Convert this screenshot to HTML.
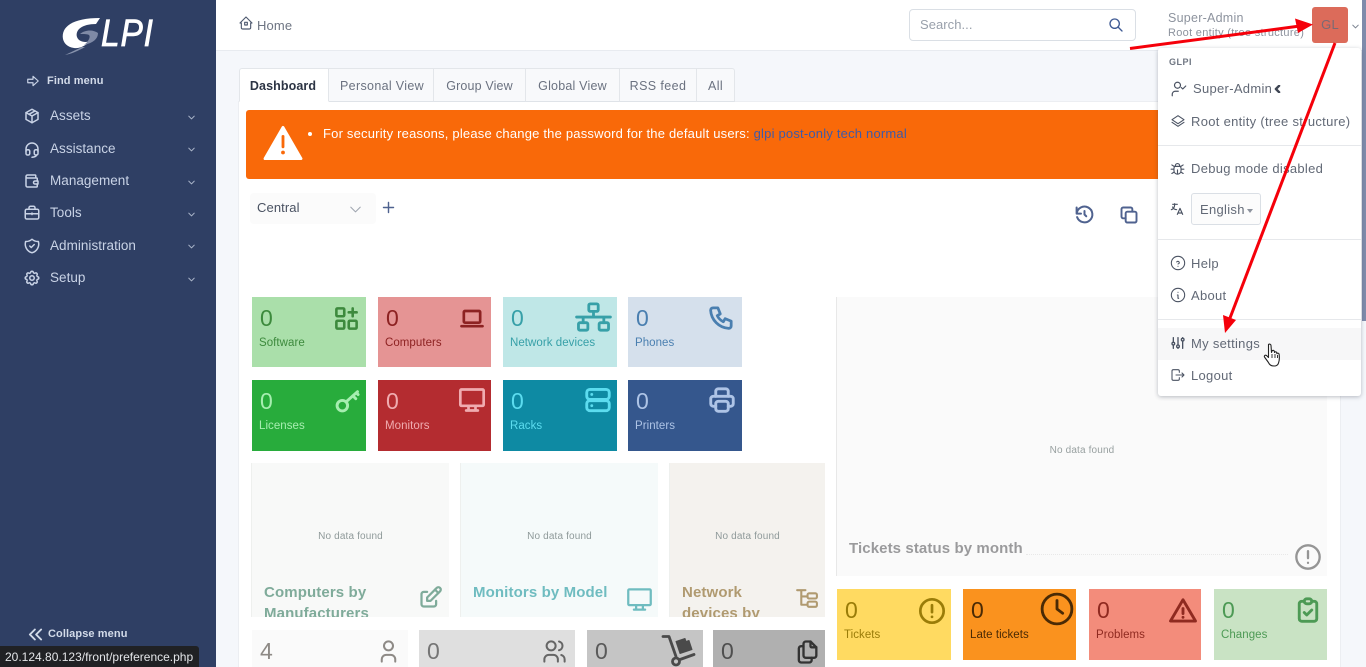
<!DOCTYPE html>
<html><head><meta charset="utf-8"><title>GLPI</title>
<style>
html,body{margin:0;padding:0;width:1366px;height:667px;overflow:hidden;background:#f5f7fb}
body{font-family:"Liberation Sans",sans-serif;font-size:13px;letter-spacing:.25px;position:relative;color:#626976}
.a,.c,.b,svg{position:absolute}
.a{white-space:nowrap;line-height:16px}
svg.i{fill:none;stroke:currentColor;stroke-width:2;stroke-linecap:round;stroke-linejoin:round}
.n{color:#c9d3e6;left:50px;font-size:13.5px;letter-spacing:.03px}
.c{height:71px;overflow:hidden}
.c svg.i{stroke-width:2.300}
.c .v{position:absolute;left:8px;top:8px;font-size:23px;line-height:26px;letter-spacing:0}
.c .l{position:absolute;left:7px;top:39px;font-size:11.5px;line-height:14px;letter-spacing:.05px;white-space:nowrap}
.b{top:463px;height:154px;overflow:hidden}
.b .nd{position:absolute;width:100%;text-align:center;top:68px;font-size:10px;line-height:12px;color:#8f9a9a;letter-spacing:.15px}
.b .t{position:absolute;left:12px;top:119px;font-weight:bold;font-size:15px;line-height:21px;letter-spacing:.12px}
.tab{top:68px;height:34px;line-height:34px;background:#f8f9fb;border:1px solid #e3e6ea;border-left:0;box-sizing:border-box;text-align:center;color:#6b7280;position:absolute;font-size:12.5px;letter-spacing:.33px;border-bottom-color:#dfe3e8}
.m{left:1191px;color:#626976;font-size:13px;letter-spacing:.3px}
.hr{position:absolute;left:1158px;width:203px;height:1px;background:#e6e8eb}
</style></head><body>

<!-- sidebar -->
<div class="b" style="left:0;top:0;width:216px;height:667px;background:#2f3f64"></div>
<svg style="left:60px;top:12px" width="42" height="45" viewBox="0 0 42 45">
<path d="M3 27C1 15 12 6 40 6L36 12C22 12 15 18 17 25C19 30 25 31 31 29C26 33 20 37 14 36C7 35 4 31 3 27Z" fill="#fff"/>
<path d="M20 22C26 17 34 18 38 21C38 27 33 31 24 33C28 30 31 25 29 23C27 22 24 22 20 22Z" fill="#7f8aa6"/>
<path d="M5 43L22 35L25 35C18 39 11 42 5 43Z" fill="#8792ac"/>
</svg>
<div class="a" style="left:101px;top:15px;font-size:38px;line-height:38px;color:#fff;font-style:italic;letter-spacing:1px;-webkit-text-stroke:.8px #fff;transform:scaleX(.88);transform-origin:left top">LPI</div>

<svg class="i" style="left:26px;top:74px;color:#c9d3e6" width="14" height="14" viewBox="0 0 24 24"><path d="M3 9h9V4l9 8-9 8v-5H3z"/></svg>
<div class="a" style="left:47px;top:73px;font-size:11px;font-weight:bold;color:#d3dbe9;letter-spacing:.1px">Find menu</div>

<svg class="i" style="left:23px;top:107px;color:#c9d3e6" width="18" height="18" viewBox="0 0 24 24"><path d="M12 3l8 4.500v9L12 21l-8-4.500v-9z"/><path d="M12 12l8-4.500M12 12v9M12 12L4 7.500M16 5.250l-8 4.500"/></svg>
<div class="a n" style="top:108px">Assets</div>
<svg class="i" style="left:23px;top:140px;color:#c9d3e6" width="18" height="18" viewBox="0 0 24 24"><rect x="4" y="13" width="5" height="7" rx="2"/><rect x="15" y="13" width="5" height="7" rx="2"/><path d="M4 15v-3a8 8 0 0 1 16 0v3M18 20a6 3 0 0 1-6 3"/></svg>
<div class="a n" style="top:141px">Assistance</div>
<svg class="i" style="left:23px;top:172px;color:#c9d3e6" width="18" height="18" viewBox="0 0 24 24"><path d="M17 8V5a1 1 0 0 0-1-1H6a2 2 0 0 0 0 4h12a1 1 0 0 1 1 1v3M19 16v3a1 1 0 0 1-1 1H6a2 2 0 0 1-2-2V6"/><path d="M20 12v4h-4a2 2 0 0 1 0-4z"/></svg>
<div class="a n" style="top:173px">Management</div>
<svg class="i" style="left:23px;top:204px;color:#c9d3e6" width="18" height="18" viewBox="0 0 24 24"><rect x="3" y="7" width="18" height="13" rx="2"/><path d="M8 7V5a2 2 0 0 1 2-2h4a2 2 0 0 1 2 2v2M3 13h18M12 12v2"/></svg>
<div class="a n" style="top:205px">Tools</div>
<svg class="i" style="left:23px;top:237px;color:#c9d3e6" width="18" height="18" viewBox="0 0 24 24"><path d="M12 3a12 12 0 0 0 8.500 3A12 12 0 0 1 12 21 12 12 0 0 1 3.500 6 12 12 0 0 0 12 3"/><path d="M9 12l2 2 4-4"/></svg>
<div class="a n" style="top:238px">Administration</div>
<svg class="i" style="left:23px;top:269px;color:#c9d3e6" width="18" height="18" viewBox="0 0 24 24"><path d="M10.300 4.300c.4-1.800 3-1.800 3.400 0a1.700 1.700 0 0 0 2.600 1.100c1.500-.9 3.300.8 2.400 2.400a1.700 1.700 0 0 0 1 2.500c1.800.4 1.800 3 0 3.400a1.700 1.700 0 0 0-1 2.600c.9 1.500-.9 3.300-2.400 2.400a1.700 1.700 0 0 0-2.600 1c-.4 1.800-3 1.800-3.400 0a1.700 1.700 0 0 0-2.600-1c-1.500.9-3.300-.9-2.400-2.400a1.700 1.700 0 0 0-1-2.600c-1.800-.4-1.800-3 0-3.400a1.700 1.700 0 0 0 1-2.500c-.9-1.600.9-3.300 2.400-2.400 1 .6 2.300.1 2.600-1.100z"/><circle cx="12" cy="12" r="3"/></svg>
<div class="a n" style="top:270px">Setup</div>
<svg class="i" style="left:186px;top:112px;color:#aab5c9" width="11" height="11" viewBox="0 0 24 24"><path d="M6 9l6 6 6-6"/></svg>
<svg class="i" style="left:186px;top:144px;color:#aab5c9" width="11" height="11" viewBox="0 0 24 24"><path d="M6 9l6 6 6-6"/></svg>
<svg class="i" style="left:186px;top:177px;color:#aab5c9" width="11" height="11" viewBox="0 0 24 24"><path d="M6 9l6 6 6-6"/></svg>
<svg class="i" style="left:186px;top:209px;color:#aab5c9" width="11" height="11" viewBox="0 0 24 24"><path d="M6 9l6 6 6-6"/></svg>
<svg class="i" style="left:186px;top:241px;color:#aab5c9" width="11" height="11" viewBox="0 0 24 24"><path d="M6 9l6 6 6-6"/></svg>
<svg class="i" style="left:186px;top:274px;color:#aab5c9" width="11" height="11" viewBox="0 0 24 24"><path d="M6 9l6 6 6-6"/></svg>

<svg class="i" style="left:28px;top:627px;color:#d3dbe9;stroke-width:3" width="15" height="15" viewBox="0 0 24 24"><path d="M11 4l-8 8 8 8M21 4l-8 8 8 8"/></svg>
<div class="a" style="left:48px;top:626px;font-size:11px;font-weight:bold;color:#d3dbe9;letter-spacing:.1px">Collapse menu</div>

<!-- header -->
<div class="b" style="left:216px;top:0;width:1150px;height:50px;background:#fff;border-bottom:1px solid #e8ebf0"></div>
<svg class="i" style="left:238px;top:15px;color:#4f5a70;stroke-width:1.700" width="16" height="16" viewBox="0 0 24 24"><path d="M5 12H3l9-9 9 9h-2M5 12v7a2 2 0 0 0 2 2h10a2 2 0 0 0 2-2v-7"/><rect x="10" y="11" width="4" height="4"/></svg>
<div class="a" style="left:257px;top:18px;color:#6e7583;letter-spacing:.15px">Home</div>

<div class="b" style="left:909px;top:9px;width:227px;height:32px;box-sizing:border-box;border:1px solid #dadfe5;border-radius:4px;background:#fff"></div>
<div class="a" style="left:920px;top:17px;color:#99a0ab;letter-spacing:.05px">Search...</div>
<svg class="i" style="left:1108px;top:17px;color:#3f5a94" width="16" height="16" viewBox="0 0 24 24"><circle cx="10" cy="10" r="7"/><path d="M21 21l-6-6"/></svg>

<div class="a" style="left:1168px;top:10px;color:#8d939e;font-size:12.5px">Super-Admin</div>
<div class="a" style="left:1168px;top:25px;color:#8d939e;font-size:11px;letter-spacing:.3px">Root entity (tree structure)</div>
<div class="b" style="left:1312px;top:7px;width:36px;height:36px;background:#dc6b5a;border-radius:3px;text-align:center;line-height:36px;color:#7a6a74;font-size:13px">GL</div>
<svg class="i" style="left:1350px;top:21px;color:#7d8592" width="11" height="11" viewBox="0 0 24 24"><path d="M6 9l6 6 6-6"/></svg>

<!-- tabs / main card -->
<div class="b" style="left:239px;top:102px;width:1101px;height:565px;background:#fff;box-shadow:0 0 0 1px #eceef2"></div>
<div class="tab" style="left:239px;width:90px;background:#fff;border-left:1px solid #e3e6ea;border-bottom-color:#fff;font-weight:bold;color:#2c3444;border-radius:3px 0 0 0;letter-spacing:.1px;padding-right:2px">Dashboard</div>
<div class="tab" style="left:329px;width:105px;padding-left:2px">Personal View</div>
<div class="tab" style="left:434px;width:92px;letter-spacing:.15px">Group View</div>
<div class="tab" style="left:526px;width:94px;letter-spacing:.2px">Global View</div>
<div class="tab" style="left:620px;width:77px;letter-spacing:.4px">RSS feed</div>
<div class="tab" style="left:697px;width:38px;border-radius:0 3px 0 0">All</div>

<!-- alert -->
<div class="b" style="left:246px;top:110px;width:1094px;height:69px;background:#f96909;border-radius:3px"></div>
<svg style="left:263px;top:125px" width="40" height="36" viewBox="0 0 42 38"><path d="M21 2.500L40 35.500H2z" fill="#fff" stroke="#fff" stroke-width="3" stroke-linejoin="round"/><path d="M21 12v11" stroke="#f96909" stroke-width="3" stroke-linecap="round"/><circle cx="21" cy="29" r="2" fill="#f96909"/></svg>
<div class="b" style="left:308px;top:132px;width:4px;height:4px;border-radius:50%;background:#fff"></div>
<div class="a" style="left:323px;top:126px;color:#fff;letter-spacing:.2px">For security reasons, please change the password for the default users: <span style="color:#3f5aa8">glpi post-only tech normal</span></div>

<!-- dashboard select -->
<div class="b" style="left:250px;top:193px;width:126px;height:31px;background:#fbfbfb;border-radius:4px"></div>
<div class="a" style="left:257px;top:200px;color:#4a5262;letter-spacing:.1px">Central</div>
<svg class="i" style="left:346px;top:200px;color:#a0a6b0;stroke-width:1.300" width="19" height="19" viewBox="0 0 24 24"><path d="M6 9l6 6 6-6"/></svg>
<svg class="i" style="left:381px;top:200px;color:#4f628f;stroke-width:2.300" width="15" height="15" viewBox="0 0 24 24"><path d="M12 4v16M4 12h16"/></svg>
<svg class="i" style="left:1074px;top:204px;color:#4f628f;stroke-width:2.300" width="21" height="21" viewBox="0 0 24 24"><path d="M12 8v4l2 2"/><path d="M3.050 11a9 9 0 1 1 .5 4M3 4v7h5"/></svg>
<svg class="i" style="left:1119px;top:205px;color:#4f628f;stroke-width:2.300" width="20" height="20" viewBox="0 0 24 24"><rect x="8" y="8" width="13" height="13" rx="2"/><path d="M16 8V5a2 2 0 0 0-2-2H5a2 2 0 0 0-2 2v9a2 2 0 0 0 2 2h3"/></svg>

<!-- row 1 cards -->
<div class="c" style="left:252px;top:297px;width:114px;height:70px;background:#aadfaa;color:#3d8a3d"><div class="v">0</div><div class="l">Software</div>
<svg class="i" style="left:81px;top:8px" width="27" height="27" viewBox="0 0 24 24"><rect x="3" y="3" width="7" height="7" rx="1"/><rect x="3" y="14" width="7" height="7" rx="1"/><rect x="14" y="14" width="7" height="7" rx="1"/><path d="M14 6.500h7M17.500 3v7"/></svg></div>
<div class="c" style="left:378px;top:297px;width:113px;height:70px;background:#e59494;color:#8d2222"><div class="v">0</div><div class="l">Computers</div>
<svg class="i" style="left:80px;top:7px" width="28" height="28" viewBox="0 0 24 24"><path d="M3 19h18"/><rect x="5" y="6" width="14" height="10" rx="1"/></svg></div>
<div class="c" style="left:503px;top:297px;width:114px;height:70px;background:#bfe7e7;color:#37a0a8"><div class="v">0</div><div class="l">Network devices</div>
<svg class="i" style="left:72px;top:5px;stroke-width:3" width="37" height="31" viewBox="0 0 38 33"><rect x="14" y="2" width="10" height="8" rx="1.500"/><rect x="3" y="22" width="10" height="8" rx="1.500"/><rect x="25" y="22" width="10" height="8" rx="1.500"/><path d="M1 16h36M19 10v6M8 16v6M30 16v6"/></svg></div>
<div class="c" style="left:628px;top:297px;width:114px;height:70px;background:#d5e0ec;color:#4a7fb0"><div class="v">0</div><div class="l">Phones</div>
<svg class="i" style="left:79px;top:6px" width="29" height="29" viewBox="0 0 24 24"><path d="M5 4h4l2 5-2.500 1.500a11 11 0 0 0 5 5L15 13l5 2v4a2 2 0 0 1-2 2A16 16 0 0 1 3 6a2 2 0 0 1 2-2"/></svg></div>

<!-- row 2 cards -->
<div class="c" style="left:252px;top:380px;width:114px;background:#28ac3c;color:#a6eeb0"><div class="v">0</div><div class="l">Licenses</div>
<svg class="i" style="left:81px;top:7px;stroke-width:2.500" width="28" height="28" viewBox="0 0 24 24"><circle cx="8" cy="16" r="4.500"/><path d="M11.500 12.500L21 4M17 7.500l2.500 2.500M20 5l1.500 1.500"/></svg></div>
<div class="c" style="left:378px;top:380px;width:113px;background:#b42c30;color:#f0acb0"><div class="v">0</div><div class="l">Monitors</div>
<svg class="i" style="left:80px;top:6px" width="28" height="28" viewBox="0 0 24 24"><rect x="2" y="3" width="20" height="14" rx="1"/><path d="M7 21h10M9 17v4M15 17v4"/></svg></div>
<div class="c" style="left:503px;top:380px;width:114px;background:#0e8aa3;color:#5cdcef"><div class="v">0</div><div class="l">Racks</div>
<svg class="i" style="left:80px;top:5px" width="30" height="30" viewBox="0 0 24 24"><rect x="3" y="3.500" width="18" height="8" rx="2.500"/><rect x="3" y="12.500" width="18" height="8" rx="2.500"/><path d="M7 7.500h.01M7 16.500h.01"/></svg></div>
<div class="c" style="left:628px;top:380px;width:114px;background:#35578d;color:#aec4e6"><div class="v">0</div><div class="l">Printers</div>
<svg class="i" style="left:79px;top:5px" width="30" height="30" viewBox="0 0 24 24"><path d="M17 17h2a2 2 0 0 0 2-2v-4a2 2 0 0 0-2-2H5a2 2 0 0 0-2 2v4a2 2 0 0 0 2 2h2"/><path d="M17 9V5a2 2 0 0 0-2-2H9a2 2 0 0 0-2 2v4"/><rect x="7" y="13" width="10" height="8" rx="2"/></svg></div>

<!-- big panels -->
<div class="b" style="left:252px;width:197px;background:#f8f9f8;color:#7fab9a;box-shadow:-1px 0 0 #eef0ee"><div class="nd">No data found</div><div class="t">Computers by<br>Manufacturers</div>
<svg class="i" style="left:165px;top:121px" width="27" height="27" viewBox="0 0 24 24"><path d="M9 7H6a2 2 0 0 0-2 2v9a2 2 0 0 0 2 2h9a2 2 0 0 0 2-2v-3"/><path d="M9 15h3l8.500-8.500a2.100 2.100 0 0 0-3-3L9 12z"/><path d="M16 5l3 3"/></svg></div>
<div class="b" style="left:461px;width:197px;background:#f5fafa;color:#6fbcc0;box-shadow:-1px 0 0 #eef0ee"><div class="nd">No data found</div><div class="t">Monitors by Model</div>
<svg class="i" style="left:165px;top:123px" width="27" height="27" viewBox="0 0 24 24"><rect x="2" y="3" width="20" height="14" rx="1"/><path d="M7 21h10M9 17v4M15 17v4"/></svg></div>
<div class="b" style="left:670px;width:155px;background:#f4f2ee;color:#b09a70;box-shadow:-1px 0 0 #eef0ee"><div class="nd">No data found</div><div class="t">Network<br>devices by</div>
<svg class="i" style="left:124px;top:123px" width="25" height="25" viewBox="0 0 24 24"><path d="M3 4h8M7 4v14h6M7 10h6"/><rect x="13" y="7" width="9" height="5" rx="1.500"/><rect x="13" y="15" width="9" height="5" rx="1.500"/></svg></div>

<!-- tickets by month -->
<div class="b" style="left:837px;top:297px;width:490px;height:279px;background:#fafafa;box-shadow:-1px 0 0 #e8e8e8"></div>
<div class="a" style="left:837px;width:490px;text-align:center;top:442px;font-size:10px;color:#98a0a0;letter-spacing:.15px;margin-top:0;padding-top:1px">No data found</div>
<div class="b" style="left:1026px;top:554px;width:262px;height:0;border-top:1px dotted #e8e8e8"></div>
<div class="a" style="left:849px;top:541px;font-weight:bold;font-size:15px;color:#9a9a9c;letter-spacing:.1px">Tickets status by month</div>
<svg class="i" style="left:1294px;top:543px;color:#959595" width="28" height="28" viewBox="0 0 24 24"><circle cx="12" cy="12" r="10"/><path d="M12 7v6M12 17h.01"/></svg>

<!-- ticket cards -->
<div class="c" style="left:837px;top:589px;width:114px;background:#ffda61;color:#9a7c08"><div class="v">0</div><div class="l">Tickets</div>
<svg class="i" style="left:81px;top:8px" width="28" height="28" viewBox="0 0 24 24"><circle cx="12" cy="12" r="10"/><path d="M12 7v6M12 17h.01"/></svg></div>
<div class="c" style="left:963px;top:589px;width:113px;background:#fa921e;color:#4a2a05"><div class="v">0</div><div class="l">Late tickets</div>
<svg class="i" style="left:77px;top:3px;stroke-width:2" width="34" height="34" viewBox="0 0 24 24"><circle cx="12" cy="12" r="10.500"/><path d="M12 6v6l4 3"/></svg></div>
<div class="c" style="left:1089px;top:589px;width:112px;background:#f38c7b;color:#8f2a20"><div class="v">0</div><div class="l">Problems</div>
<svg class="i" style="left:79px;top:7px" width="30" height="30" viewBox="0 0 24 24"><path d="M12 3L2 20h20z"/><path d="M12 10v4M12 17h.01"/></svg></div>
<div class="c" style="left:1214px;top:589px;width:113px;background:#c9e3c4;color:#4d9a55"><div class="v">0</div><div class="l">Changes</div>
<svg class="i" style="left:79px;top:6px" width="30" height="30" viewBox="0 0 24 24"><path d="M9 5H7a2 2 0 0 0-2 2v12a2 2 0 0 0 2 2h10a2 2 0 0 0 2-2V7a2 2 0 0 0-2-2h-2"/><rect x="9" y="3" width="6" height="4" rx="2"/><path d="M9 14l2 2 4-4"/></svg></div>

<!-- bottom row -->
<div class="c" style="left:252px;top:630px;width:156px;height:37px;background:#fafafa;color:#8e8a86"><div class="v">4</div>
<svg class="i" style="left:123px;top:8px;stroke-width:1.800" width="27" height="27" viewBox="0 0 24 24"><circle cx="12" cy="7" r="4"/><path d="M6 21v-2a4 4 0 0 1 4-4h4a4 4 0 0 1 4 4v2"/></svg></div>
<div class="c" style="left:419px;top:630px;width:156px;height:37px;background:#dfdfdf;color:#757575"><div class="v">0</div>
<svg class="i" style="left:122px;top:8px;stroke-width:1.800;color:#666" width="27" height="27" viewBox="0 0 24 24"><circle cx="9" cy="7" r="4"/><path d="M3 21v-2a4 4 0 0 1 4-4h4a4 4 0 0 1 4 4v2M16 3.100a4 4 0 0 1 0 7.800M21 21v-2a4 4 0 0 0-3-3.900"/></svg></div>
<div class="c" style="left:587px;top:630px;width:116px;height:37px;background:#c5c5c5;color:#5a5a5a"><div class="v">0</div>
<svg class="i" style="left:74px;top:3px;stroke-width:2.800;color:#4a4a4a" width="36" height="34" viewBox="0 0 36 33"><path d="M2 3h6l7 20"/><circle cx="15" cy="28" r="3.500"/><path d="M19 26l14-5"/><path d="M15 8l9-3 1 3 3-1 3 9-12 4z" fill="#4a4a4a" stroke-width="1"/></svg></div>
<div class="c" style="left:713px;top:630px;width:112px;height:37px;background:#b0b0b0;color:#4f4f4f"><div class="v">0</div>
<svg class="i" style="left:80px;top:7px;stroke-width:2;color:#333" width="28" height="30" viewBox="0 0 24 24"><path d="M15 3v4a1 1 0 0 0 1 1h4"/><path d="M18 17h-7a2 2 0 0 1-2-2V5a2 2 0 0 1 2-2h4l5 5v7a2 2 0 0 1-2 2"/><path d="M16 17v2a2 2 0 0 1-2 2H7a2 2 0 0 1-2-2V9a2 2 0 0 1 2-2h2"/></svg></div>

<!-- scrollbar -->
<div class="b" style="left:1362px;top:0;width:4px;height:321px;background:#7f8bab"></div>

<!-- dropdown -->
<div class="b" style="left:1158px;top:48px;width:203px;height:348px;background:#fff;border-radius:3px;box-shadow:0 1px 4px rgba(30,40,60,.3)"></div>
<div class="a" style="left:1169px;top:54px;font-size:9px;font-weight:bold;color:#6f7682;letter-spacing:.5px">GLPI</div>

<svg class="i" style="left:1170px;top:80px;color:#4a5262;stroke-width:1.600" width="18" height="18" viewBox="0 0 24 24"><circle cx="10" cy="7" r="4"/><path d="M3 21v-2a4 4 0 0 1 4-4h4M15 10l2 2 4-4"/></svg>
<div class="a m" style="left:1193px;top:81px">Super-Admin</div>
<svg class="i" style="left:1274px;top:85px;color:#3f4654;stroke-width:3" width="7" height="8" viewBox="0 0 8 10"><path d="M6 1L2 5l4 4"/></svg>

<svg class="i" style="left:1170px;top:113px;color:#4a5262;stroke-width:1.600" width="16" height="16" viewBox="0 0 24 24"><path d="M12 4L3 10l9 6 9-6z"/><path d="M3 14l9 6 9-6"/></svg>
<div class="a m" style="top:114px">Root entity (tree structure)</div>
<div class="hr" style="top:145px"></div>

<svg class="i" style="left:1169px;top:160px;color:#4a5262;stroke-width:1.600" width="17" height="17" viewBox="0 0 24 24"><path d="M9 9V8a3 3 0 0 1 6 0v1"/><path d="M8 9h8a6 6 0 0 1 1 3v3a5 5 0 0 1-10 0v-3a6 6 0 0 1 1-3M3 13h4M17 13h4M12 20v-6M4 19l3.350-2M20 19l-3.350-2M4 7l3.750 2.400M20 7l-3.750 2.400"/></svg>
<div class="a m" style="top:161px">Debug mode disabled</div>

<svg class="i" style="left:1170px;top:201px;color:#4a5262;stroke-width:1.700" width="16" height="16" viewBox="0 0 24 24"><path d="M4 5h7M7 4v1c0 4-2 7-5 8M4 9c0 2 3 4 6 4M11 20l4-9 4 9M18 18h-6"/></svg>
<div class="b" style="left:1191px;top:193px;width:70px;height:32px;box-sizing:border-box;border:1px solid #dadfe5;border-radius:3px;background:#fcfcfc"></div>
<div class="a m" style="left:1200px;top:202px">English</div>
<div class="b" style="left:1247px;top:209px;width:0;height:0;border:3.500px solid transparent;border-top:4px solid #8d939e;border-bottom:0"></div>
<div class="hr" style="top:239px"></div>

<svg class="i" style="left:1170px;top:255px;color:#4a5262;stroke-width:1.600" width="16" height="16" viewBox="0 0 24 24"><circle cx="12" cy="12" r="10"/><path d="M12 17h.01M12 13.500a2 2 0 0 0 1-3.700 2.500 2.500 0 0 0-3 .6"/></svg>
<div class="a m" style="top:256px">Help</div>
<svg class="i" style="left:1170px;top:287px;color:#4a5262;stroke-width:1.600" width="16" height="16" viewBox="0 0 24 24"><circle cx="12" cy="12" r="10"/><path d="M12 8h.01M11 12h1v5h1"/></svg>
<div class="a m" style="top:288px">About</div>
<div class="hr" style="top:319px"></div>

<div class="b" style="left:1158px;top:328px;width:203px;height:32px;background:#f7f7f8"></div>
<svg class="i" style="left:1170px;top:335px;color:#4a5262;stroke-width:2" width="16" height="16" viewBox="0 0 24 24"><circle cx="5" cy="13" r="2"/><path d="M5 4v7M5 15v5"/><circle cx="12" cy="17" r="2"/><path d="M12 4v11M12 19v1"/><circle cx="19" cy="7" r="2"/><path d="M19 4v1M19 9v11"/></svg>
<div class="a m" style="top:336px">My settings</div>
<svg class="i" style="left:1170px;top:367px;color:#4a5262;stroke-width:1.600" width="16" height="16" viewBox="0 0 24 24"><path d="M14 8V6a2 2 0 0 0-2-2H5a2 2 0 0 0-2 2v12a2 2 0 0 0 2 2h7a2 2 0 0 0 2-2v-2M9 12h12M18 9l3 3-3 3"/></svg>
<div class="a m" style="top:368px">Logout</div>

<!-- hand cursor -->
<svg style="left:1263px;top:342px" width="20" height="27" viewBox="0 0 20 27"><path d="M5.500 2.500c1-1 2.500 0 2.500 1l.5 7 .5-1.500c.5-1 2-1 2.300.2l.2 1.300c.3-1 2-1 2.200.2l.2 1c.5-1 2-.7 2.200.5.400 3 .4 6-.5 8.500-.5 2-2 3.300-4.500 3.300-3 0-4.500-1-6-4L1.500 15c-.5-1 .5-2.500 2-1.500l2 2z" fill="#fff" stroke="#222" stroke-width="1.100" stroke-linejoin="round"/><path d="M9 12v4M12 12v4M14.500 13v3" stroke="#222" stroke-width=".9"/></svg>

<!-- red arrows -->
<svg style="left:0;top:0" width="1366" height="667">
<path d="M1130 48.500L1300 26" stroke="#f5000a" stroke-width="3"/>
<path d="M1313 24.500L1295 18.500L1298 33z" fill="#f5000a"/>
<path d="M1335 43L1230 318" stroke="#f5000a" stroke-width="3"/>
<path d="M1225 333L1223 315L1236 320z" fill="#f5000a"/>
</svg>

<!-- status bar -->
<div class="b" style="left:0;top:646px;width:199px;height:21px;background:#202124;border-radius:0 3px 0 0;color:#e3e5e8;font-size:12px;line-height:22px;padding-left:5px;box-sizing:border-box;letter-spacing:0;white-space:nowrap">20.124.80.123/front/preference.php</div>

</body></html>
